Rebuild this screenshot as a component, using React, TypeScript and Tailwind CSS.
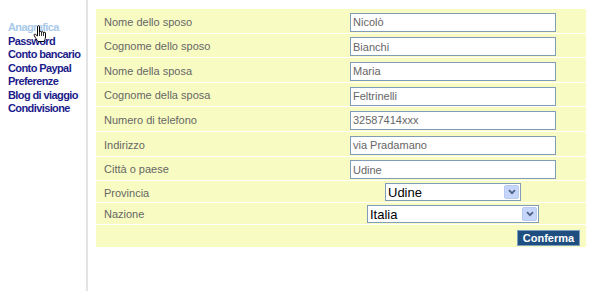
import React from "react";

const textRows: [string, string][] = [
  ["Nome dello sposo", "Nicolò"],
  ["Cognome dello sposo", "Bianchi"],
  ["Nome della sposa", "Maria"],
  ["Cognome della sposa", "Feltrinelli"],
  ["Numero di telefono", "32587414xxx"],
  ["Indirizzo", "via Pradamano"],
  ["Città o paese", "Udine"],
];

const nav = [
  "Anagrafica",
  "Password",
  "Conto bancario",
  "Conto Paypal",
  "Preferenze",
  "Blog di viaggio",
  "Condivisione",
];

function Select({ value, w }: { value: string; w: string }) {
  return (
    <div className={`${w} h-[18px] border border-[#7f9db9] bg-white flex items-center justify-between`}>
      <span className="pl-[2px] text-[13px] text-black leading-none">{value}</span>
      <span className="w-[15px] h-[14px] mr-[1px] rounded-[2px] border border-[#b9c9ef] bg-[#c6d6fb] flex items-center justify-center">
        <svg width="8" height="6" viewBox="0 0 8 6">
          <path d="M1 1.2 L4 4.2 L7 1.2" fill="none" stroke="#4d6185" strokeWidth="1.8" />
        </svg>
      </span>
    </div>
  );
}

export default function App() {
  return (
    <div
      className="w-[600px] h-[291px] bg-white flex overflow-hidden"
      style={{ fontFamily: '"Liberation Sans", Arial, sans-serif' }}
    >
      <div className="w-[88px] shrink-0 border-r-[2px] border-[#e4e4e4] relative pt-[21px] pl-[8px]">
        {nav.map((n, i) => (
          <div
            key={n}
            className={`whitespace-nowrap text-[11px] font-bold leading-[13.5px] tracking-[-0.6px] ${i === 0 ? "text-[#a9c9ea]" : "text-[#1c1c8a]"}`}
          >
            {n}
          </div>
        ))}
        <svg className="absolute left-[33px] top-[25px]" width="16" height="18" viewBox="0 0 16 18">
          <path
            d="M4.5 1.5 c0-1 2-1 2 0 V7 c0-1 2-1 2 0 v0.5 c0-1 2-1 2 0 v0.5 c0-1 2-1 2 0 V12 c0 2-1 3-1.5 4.5 H5 C4 15 2.5 13 1.2 10.5 c-0.6-1 0.6-2 1.5-1 L4.5 11 Z"
            fill="#fff"
            stroke="#000"
            strokeWidth="1"
            strokeLinejoin="round"
          />
          <path d="M6.5 7 V11 M8.5 7.5 V11 M10.5 8 V11" stroke="#000" strokeWidth="0.8" />
        </svg>
      </div>
      <div className="pl-[8px] pt-[9px]">
        <div className="w-[490px] bg-[#f8fcc2]">
          {textRows.map(([l, v]) => (
            <div key={l} className="h-[24.6px] border-b border-white grid grid-cols-[224px_1fr] items-center">
              <div className="pl-[8px] pt-[2px] text-[11px] text-[#666]">{l}</div>
              <div className="flex justify-center pt-[3px]">
                <div className="w-[206px] h-[19px] border border-[#7f9db9] bg-white flex items-center pl-[2px] text-[11px] text-[#666]">
                  {v}
                </div>
              </div>
            </div>
          ))}
          <div className="h-[22px] border-b border-white grid grid-cols-[224px_1fr] items-center">
            <div className="pl-[8px] pt-[3px] text-[11px] text-[#666]">Provincia</div>
            <div className="flex justify-center pt-[1px]">
              <Select value="Udine" w="w-[136px]" />
            </div>
          </div>
          <div className="h-[22px] border-b border-white grid grid-cols-[224px_1fr] items-center">
            <div className="pl-[8px] pt-[2px] text-[11px] text-[#666]">Nazione</div>
            <div className="flex justify-center pt-[1px]">
              <Select value="Italia" w="w-[172px]" />
            </div>
          </div>
          <div className="h-[22px] flex items-end justify-end pr-[6px] pb-[1px]">
            <button className="h-[16px] w-[63px] bg-[#1f4f80] border border-[#7f9fbf] text-white text-[11px] font-bold leading-none flex items-center justify-center">
              Conferma
            </button>
          </div>
        </div>
      </div>
    </div>
  );
}
